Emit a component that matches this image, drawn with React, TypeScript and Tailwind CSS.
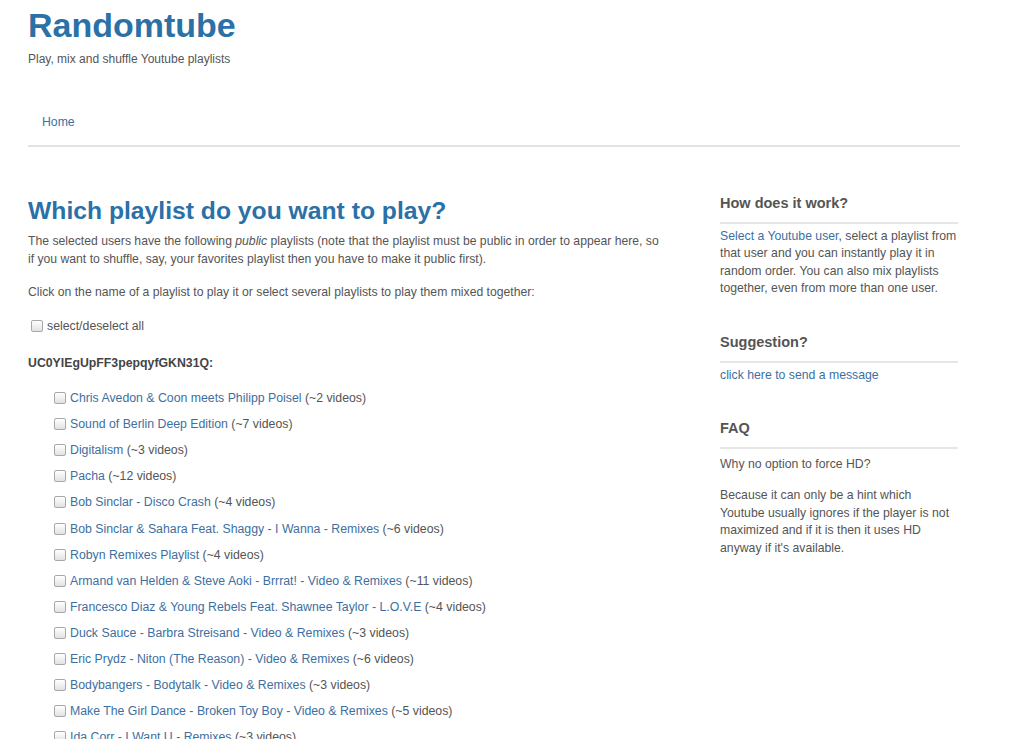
import React from "react";

const items: [string, string][] = [
  ["Chris Avedon & Coon meets Philipp Poisel", "~2 videos"],
  ["Sound of Berlin Deep Edition", "~7 videos"],
  ["Digitalism", "~3 videos"],
  ["Pacha", "~12 videos"],
  ["Bob Sinclar - Disco Crash", "~4 videos"],
  ["Bob Sinclar & Sahara Feat. Shaggy - I Wanna - Remixes", "~6 videos"],
  ["Robyn Remixes Playlist", "~4 videos"],
  ["Armand van Helden & Steve Aoki - Brrrat! - Video & Remixes", "~11 videos"],
  ["Francesco Diaz & Young Rebels Feat. Shawnee Taylor - L.O.V.E", "~4 videos"],
  ["Duck Sauce - Barbra Streisand - Video & Remixes", "~3 videos"],
  ["Eric Prydz - Niton (The Reason) - Video & Remixes", "~6 videos"],
  ["Bodybangers - Bodytalk - Video & Remixes", "~3 videos"],
  ["Make The Girl Dance - Broken Toy Boy - Video & Remixes", "~5 videos"],
  ["Ida Corr - I Want U - Remixes", "~3 videos"],
  ["Avicii - Levels - Remixes", "~4 videos"],
];

function Box() {
  return (
    <span className="inline-block w-[12px] h-[12px] rounded-[2px] border border-[#a8a8a8] bg-gradient-to-b from-[#ffffff] to-[#e2e2e2] shrink-0" />
  );
}

export default function App() {
  return (
    <div
      className="min-h-screen bg-white text-[#555] text-[12.2px] leading-[18px]"
      style={{ fontFamily: '"Liberation Sans", Arial, sans-serif' }}
    >
      <div className="ml-[28px] w-[932px]">
        <h1 className="mt-[5px] text-[34px] leading-[40px] font-bold text-[#2b71a7]">Randomtube</h1>
        <p className="mt-[5px] text-[12px] text-[#555]">Play, mix and shuffle Youtube playlists</p>
        <div className="mt-[45px] pl-[14px]">
          <a className="text-[12.25px] text-[#3d6fa1]">Home</a>
        </div>
        <div className="mt-[14px] h-[2px] bg-[#e3e3e3]" />

        <div className="flex">
          <div className="w-[636px] shrink-0">
            <h2 className="mt-[49px] text-[24.7px] leading-[30px] font-bold text-[#2b71a7] whitespace-nowrap">
              Which playlist do you want to play?
            </h2>
            <p className="mt-[6px]">
              The selected users have the following <i>public</i> playlists (note that the playlist must be public in order to appear here, so if you want to shuffle, say, your favorites playlist then you have to make it public first).
            </p>
            <p className="mt-[15px] whitespace-nowrap">
              Click on the name of a playlist to play it or select several playlists to play them mixed together:
            </p>
            <label className="mt-[16px] flex items-center gap-[4px] pl-[3px] text-[12.3px]">
              <Box />
              <span>select/deselect all</span>
            </label>
            <div className="mt-[19px] font-bold text-[#444] text-[12.3px]">UC0YIEgUpFF3pepqyfGKN31Q:</div>
            <ul className="mt-[13px] pl-[26px] text-[12.3px]">
              {items.map(([name, count]) => (
                <li key={name} className="flex items-center gap-[4px] h-[26.1px] whitespace-nowrap">
                  <Box />
                  <span>
                    <a className="text-[#3d6fa1]">{name}</a> ({count})
                  </span>
                </li>
              ))}
            </ul>
          </div>

          <div className="ml-[56px] w-[238px] shrink-0 text-[12.25px] leading-[17.4px]">
            <h4 className="mt-[46px] text-[14.5px] leading-[20px] font-bold text-[#555]">How does it work?</h4>
            <div className="mt-[9px] h-[2px] bg-[#e6e6e6]" />
            <p className="mt-[4px]">
              <a className="text-[#3d6fa1]">Select a Youtube user</a>, select a playlist from that user and you can instantly play it in random order. You can also mix playlists together, even from more than one user.
            </p>
            <h4 className="mt-[34px] text-[14.5px] leading-[20px] font-bold text-[#555]">Suggestion?</h4>
            <div className="mt-[9px] h-[2px] bg-[#e6e6e6]" />
            <p className="mt-[4px]">
              <a className="text-[#3d6fa1]">click here to send a message</a>
            </p>
            <h4 className="mt-[34px] text-[14.5px] leading-[20px] font-bold text-[#555]">FAQ</h4>
            <div className="mt-[9px] h-[2px] bg-[#e6e6e6]" />
            <p className="mt-[7px]">Why no option to force HD?</p>
            <p className="mt-[14px]">
              Because it can only be a hint which Youtube usually ignores if the player is not maximized and if it is then it uses HD anyway if it's available.
            </p>
          </div>
        </div>
      </div>
    </div>
  );
}
